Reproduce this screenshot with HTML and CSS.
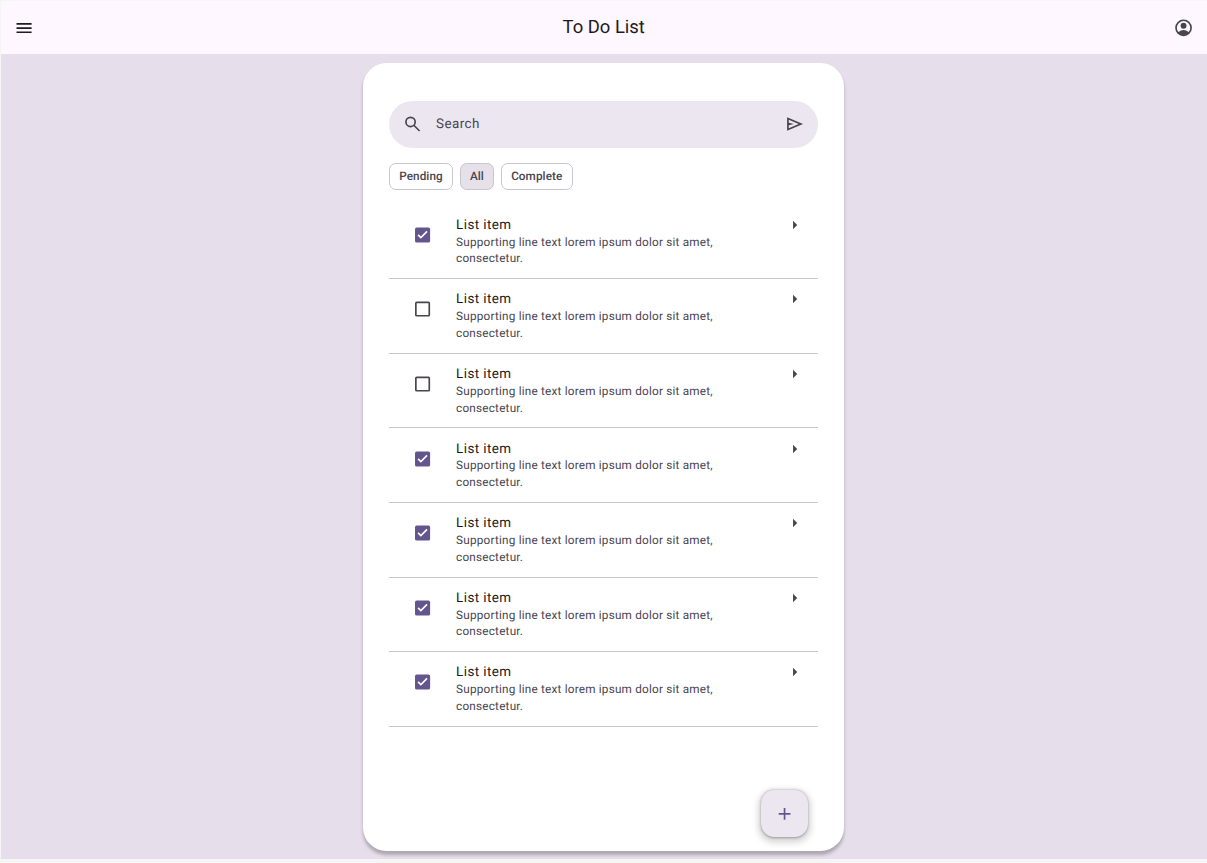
FILE: index.html
```
<!DOCTYPE html>
<html lang="en">
<head>
<meta charset="utf-8">
<title>To Do List</title>
<link rel="stylesheet" href="styles.css">
</head>
<body>
<svg class="defs" aria-hidden="true">
  <symbol id="checked" viewBox="-0.6 0 24 24"><rect x="3" y="3" width="18" height="18" rx="2" fill="#65558f"/><path d="M10 16.4l-4-4L7.4 11l2.6 2.6L16.6 7 18 8.4z" fill="#fff"/></symbol>
  <symbol id="unchecked" viewBox="-0.6 0 24 24"><rect x="4" y="4" width="16" height="16" rx="1" fill="none" stroke="#49454f" stroke-width="2"/></symbol>
  <symbol id="arrow" viewBox="0.4 0 24 24"><path d="M10 17V7l5 5z"/></symbol>
</svg>
<div class="screen">
  <header class="topbar">
    <svg class="icon dark" viewBox="0 0 24 24"><path d="M3 18v-2h18v2zm0-5v-2h18v2zm0-5V6h18v2z"/></svg>
    <h1 class="title">To Do List</h1>
    <svg class="icon" viewBox="0.6 0.3 24 24"><path d="M12 2a10 10 0 1 0 0 20 10 10 0 0 0 0-20zM5.86 17.12a10 10 0 0 1 12.28 0 8 8 0 1 0-12.28 0zM12 6a3.5 3.5 0 1 1 0 7 3.5 3.5 0 0 1 0-7z" fill-rule="evenodd"/></svg>
  </header>
  <main class="card">
    <div class="search">
      <svg class="icon" viewBox="0.5 0 24 24"><path d="M19.6 21l-6.3-6.3A6.1 6.1 0 0 1 9.5 16 6.5 6.5 0 1 1 16 9.5a6.1 6.1 0 0 1-1.3 3.8l6.3 6.3zM9.5 14a4.5 4.5 0 1 0 0-9 4.5 4.5 0 0 0 0 9z"/></svg>
      <span class="search-label">Search</span>
      <svg class="icon" viewBox="0.5 0 24 24"><path d="M3 20V4l19 8zm2-3l11.85-5L5 7v3.5l6 1.5-6 1.5z"/></svg>
    </div>
    <div class="chips">
      <span class="chip pending">Pending</span>
      <span class="chip all">All</span>
      <span class="chip complete">Complete</span>
    </div>
    <ul class="list">
      <li class="item"><svg class="icon box"><use href="#checked"/></svg><div class="text"><div class="headline">List item</div><div class="support">Supporting line text lorem ipsum dolor sit amet, consectetur.</div></div><svg class="icon"><use href="#arrow"/></svg></li>
      <li class="item"><svg class="icon box"><use href="#unchecked"/></svg><div class="text"><div class="headline">List item</div><div class="support">Supporting line text lorem ipsum dolor sit amet, consectetur.</div></div><svg class="icon"><use href="#arrow"/></svg></li>
      <li class="item"><svg class="icon box"><use href="#unchecked"/></svg><div class="text"><div class="headline">List item</div><div class="support">Supporting line text lorem ipsum dolor sit amet, consectetur.</div></div><svg class="icon"><use href="#arrow"/></svg></li>
      <li class="item"><svg class="icon box"><use href="#checked"/></svg><div class="text"><div class="headline">List item</div><div class="support">Supporting line text lorem ipsum dolor sit amet, consectetur.</div></div><svg class="icon"><use href="#arrow"/></svg></li>
      <li class="item"><svg class="icon box"><use href="#checked"/></svg><div class="text"><div class="headline">List item</div><div class="support">Supporting line text lorem ipsum dolor sit amet, consectetur.</div></div><svg class="icon"><use href="#arrow"/></svg></li>
      <li class="item"><svg class="icon box"><use href="#checked"/></svg><div class="text"><div class="headline">List item</div><div class="support">Supporting line text lorem ipsum dolor sit amet, consectetur.</div></div><svg class="icon"><use href="#arrow"/></svg></li>
      <li class="item"><svg class="icon box"><use href="#checked"/></svg><div class="text"><div class="headline">List item</div><div class="support">Supporting line text lorem ipsum dolor sit amet, consectetur.</div></div><svg class="icon"><use href="#arrow"/></svg></li>
    </ul>
    <div class="fab"><svg class="icon plus" viewBox="-0.6 0.2 24 24"><path d="M11 13H5v-2h6V5h2v6h6v2h-6v6h-2z"/></svg></div>
  </main>
</div>
</body>
</html>
```
FILE: styles.css
```
* { box-sizing: border-box; }

body {
  margin: 0;
  height: 863px;
  padding: 1px 0 0 1px;
  background: #f5f5f5;
  font-family: Roboto, sans-serif;
  text-rendering: geometricPrecision;
  color: #1d1b20;
  overflow: hidden;
}

.defs { display: none; }

.screen {
  height: 857.6px;
  background: #e6dfeb;
  display: flex;
  flex-direction: column;
}

.topbar {
  height: 53.4px;
  flex: none;
  background: #fef7ff;
  display: flex;
  align-items: center;
  justify-content: space-between;
  padding: 0 13.2px 0 12.6px;
}

.title {
  margin: 0;
  font-size: 18.45px;
  font-weight: 400;
  line-height: 24px;
  padding-bottom: 1px;
}

.icon {
  display: block;
  flex: none;
  width: 20.13px;
  height: 20.13px;
  fill: #49454f;
}

.icon.dark { fill: #1d1b20; }

.card {
  width: 481px;
  height: 787.8px;
  margin: 8.6px 0 0 362px;
  padding: 37.6px 26px 0;
  background: #fff;
  border-radius: 23.5px;
  box-shadow: 0 3.4px 3.4px rgba(0, 0, 0, 0.25);
  display: flex;
  flex-direction: column;
}

.search {
  height: 47px;
  flex: none;
  border-radius: 23.5px;
  background: #ece6f0;
  display: flex;
  align-items: center;
  padding: 0 13px 0 14px;
}

.search-label {
  flex: 1;
  margin-left: 12.9px;
  font-size: 13.42px;
  line-height: 16px;
  padding-top: 2px;
  letter-spacing: 0.42px;
  color: #49454f;
}

.chips {
  display: flex;
  gap: 6.7px;
  margin-top: 15.2px;
  flex: none;
}

.chip {
  height: 26.8px;
  border: 1px solid #cac4d0;
  border-radius: 6.7px;
  display: flex;
  align-items: center;
  justify-content: center;
  font-size: 11.74px;
  font-weight: 500;
  letter-spacing: 0.084px;
  color: #49454f;
}

.pending { width: 64px; }
.all { width: 34.4px; background: #e6e0e9; }
.complete { width: 72px; }

.list {
  list-style: none;
  margin: 15.1px 0 0;
  padding: 0;
  flex: none;
}

.item {
  height: 74.6px;
  padding: 10.1px 12.8px 0 23.2px;
  border-bottom: 1px solid #cac4d0;
  display: flex;
  align-items: flex-start;
}

.box { margin-top: 10px; }

.text {
  width: 290px;
  margin: 0 auto 0 23.8px;
}

.headline {
  padding-top: 1.1px;
  font-size: 13.42px;
  line-height: 20.13px;
  letter-spacing: 0.42px;
}

.support {
  margin-top: -2.3px;
  font-size: 11.74px;
  line-height: 16.77px;
  letter-spacing: 0.21px;
  color: #49454f;
}

.fab {
  width: 47px;
  height: 47px;
  flex: none;
  margin: auto 10px 13.4px auto;
  border-radius: 13.4px;
  background: #ece6f0;
  display: flex;
  align-items: center;
  justify-content: center;
  box-shadow: 0 0.8px 2.5px rgba(0, 0, 0, 0.3), 0 3.4px 6.7px 2.5px rgba(0, 0, 0, 0.15);
}

.icon.plus { fill: #65558f; }
```
